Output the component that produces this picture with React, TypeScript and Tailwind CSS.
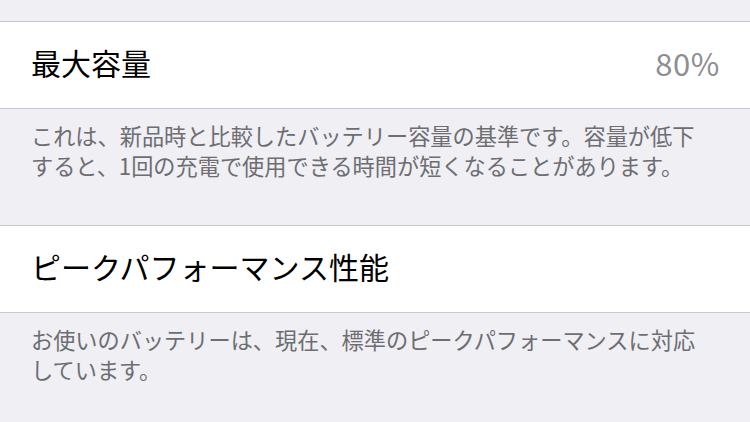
const font = "font-['Noto_Sans_CJK_JP','Noto_Sans',sans-serif]";

const Row = ({ label, value }: { label: string; value?: string }) => (
  <div className="flex h-[88px] items-center justify-between border-y border-[#c8c7cc] bg-white pb-[6px] pl-[31px] pr-[30px]">
    <span className="text-[30px] leading-none text-black">{label}</span>
    {value && (
      <span className="text-[31px] leading-none tracking-[0.6px] text-[#8e8e93]">{value}</span>
    )}
  </div>
);

const Footer = ({ lines }: { lines: string[] }) => (
  <div className="h-[116px] px-[31px] pt-[11px] text-[22.2px] leading-[30px] text-[#6d6d72]">
    {lines.map((l) => (
      <div key={l}>{l}</div>
    ))}
  </div>
);

export default function App() {
  return (
    <div className={`h-[422px] w-[750px] overflow-hidden bg-[#efeff4] ${font}`}>
      <div className="h-[21px]" />
      <Row label="最大容量" value="80%" />
      <Footer
        lines={[
          'これは、新品時と比較したバッテリー容量の基準です。容量が低下',
          'すると、1回の充電で使用できる時間が短くなることがあります。',
        ]}
      />
      <Row label="ピークパフォーマンス性能" />
      <Footer
        lines={[
          'お使いのバッテリーは、現在、標準のピークパフォーマンスに対応',
          'しています。',
        ]}
      />
    </div>
  );
}
